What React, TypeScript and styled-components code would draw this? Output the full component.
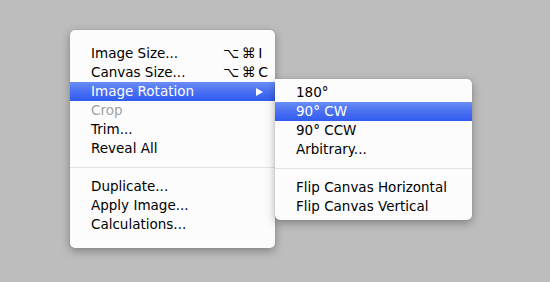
import React from "react";
import styled, { createGlobalStyle } from "styled-components";

const Global = createGlobalStyle`
  html, body { margin: 0; padding: 0; }
  body {
    background: #bdbdbd;
    width: 550px;
    height: 282px;
    overflow: hidden;
    font-family: "DejaVu Sans", "Liberation Sans", sans-serif;
  }
`;

const Stage = styled.div`
  display: flex;
  align-items: flex-start;
  padding: 30px 0 0 70px;
  width: 550px;
  height: 282px;
  box-sizing: border-box;
`;

const Menu = styled.div<{ $width: number; $pad: number; $offset?: number; $sub?: boolean }>`
  width: ${(p) => p.$width}px;
  margin-top: ${(p) => p.$offset ?? 0}px;
  padding: ${(p) => p.$pad}px 0;
  background: #fcfcfc;
  border-radius: ${(p) => (p.$sub ? "0 5px 5px 5px" : "5px")};
  box-shadow: 0 3px 10px rgba(0, 0, 0, 0.32), 0 0 1px rgba(0, 0, 0, 0.25);
  box-sizing: border-box;
  position: relative;
  z-index: ${(p) => (p.$sub ? 2 : 1)};
`;

const Row = styled.div<{ $active?: boolean; $disabled?: boolean }>`
  display: flex;
  align-items: center;
  height: 19px;
  padding: 0 12px 0 21px;
  font-size: 13.5px;
  line-height: 19px;
  color: ${(p) => (p.$active ? "#ffffff" : p.$disabled ? "#a3a3a3" : "#000000")};
  background: ${(p) =>
    p.$active ? "linear-gradient(to bottom, #6a8df6 0%, #4a70f2 50%, #2f5bef 100%)" : "transparent"};
  white-space: nowrap;
`;

const Label = styled.span`
  flex: 1;
`;

const Shortcut = styled.span`
  width: 40px;
  letter-spacing: 2.5px;
  font-size: 14px;
`;

const Arrow = styled.span`
  width: 0;
  height: 0;
  border-top: 4.5px solid transparent;
  border-bottom: 4.5px solid transparent;
  border-left: 7px solid currentColor;
`;

const Separator = styled.div`
  height: 19px;
  display: flex;
  align-items: center;
  &::after {
    content: "";
    flex: 1;
    height: 1px;
    background: #e2e2e2;
  }
`;

type Item =
  | { kind: "sep" }
  | { kind: "item"; label: string; shortcut?: string; active?: boolean; disabled?: boolean; arrow?: boolean };

const mainItems: Item[] = [
  { kind: "item", label: "Image Size...", shortcut: "⌥⌘I" },
  { kind: "item", label: "Canvas Size...", shortcut: "⌥⌘C" },
  { kind: "item", label: "Image Rotation", active: true, arrow: true },
  { kind: "item", label: "Crop", disabled: true },
  { kind: "item", label: "Trim..." },
  { kind: "item", label: "Reveal All" },
  { kind: "sep" },
  { kind: "item", label: "Duplicate..." },
  { kind: "item", label: "Apply Image..." },
  { kind: "item", label: "Calculations..." },
];

const subItems: Item[] = [
  { kind: "item", label: "180°" },
  { kind: "item", label: "90° CW", active: true },
  { kind: "item", label: "90° CCW" },
  { kind: "item", label: "Arbitrary..." },
  { kind: "sep" },
  { kind: "item", label: "Flip Canvas Horizontal" },
  { kind: "item", label: "Flip Canvas Vertical" },
];

const renderItems = (items: Item[]) =>
  items.map((it, i) =>
    it.kind === "sep" ? (
      <Separator key={i} />
    ) : (
      <Row key={i} $active={it.active} $disabled={it.disabled}>
        <Label>{it.label}</Label>
        {it.shortcut && <Shortcut>{it.shortcut}</Shortcut>}
        {it.arrow && <Arrow />}
      </Row>
    )
  );

export default function App() {
  return (
    <>
      <Global />
      <Stage>
        <Menu $width={205} $pad={14}>
          {renderItems(mainItems)}
        </Menu>
        <Menu $width={197} $pad={4} $offset={49} $sub>
          {renderItems(subItems)}
        </Menu>
      </Stage>
    </>
  );
}
